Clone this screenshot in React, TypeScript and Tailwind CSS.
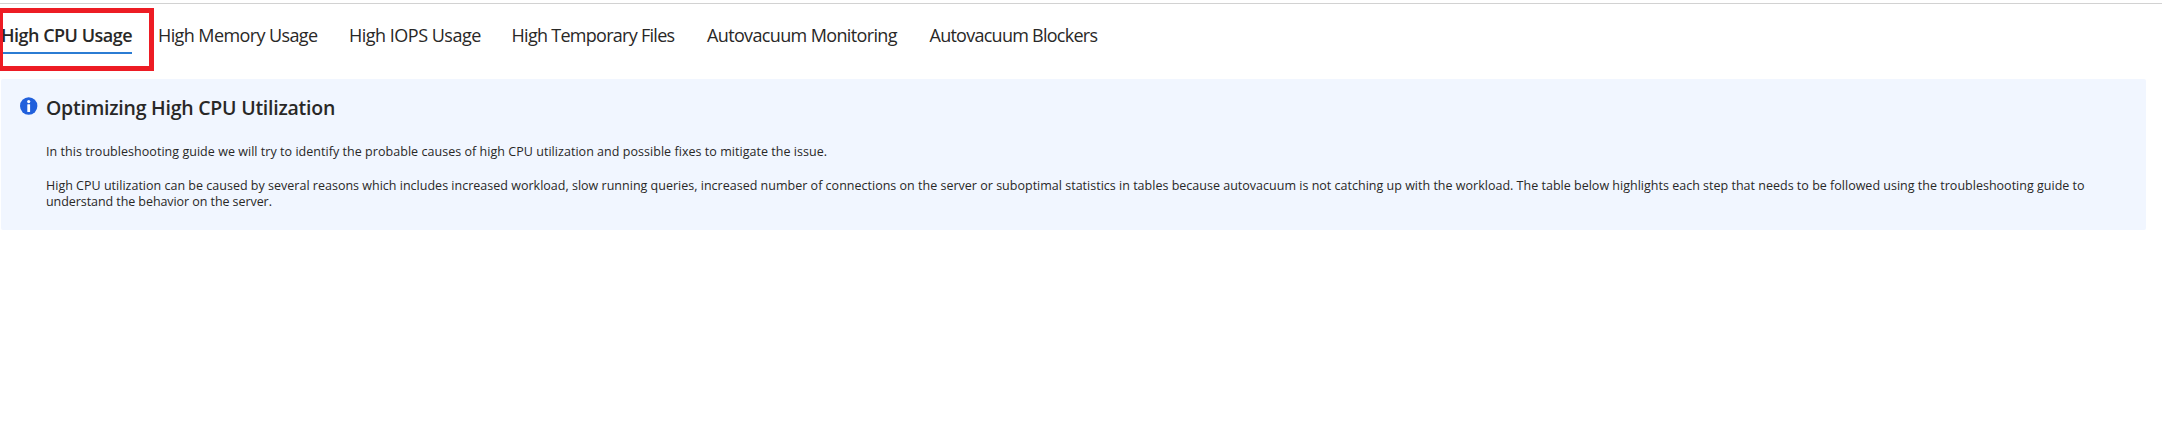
const tabs = [
  { label: 'High CPU Usage', style: 'w-[157px] font-semibold tracking-[-0.5px]' },
  { label: 'High Memory Usage', style: 'w-[191px] tracking-[-0.6px]' },
  { label: 'High IOPS Usage', style: 'w-[162.5px] tracking-[-0.5px]' },
  { label: 'High Temporary Files', style: 'w-[195.5px] tracking-[-0.72px]' },
  { label: 'Autovacuum Monitoring', style: 'w-[222.5px] tracking-[-0.64px]' },
  { label: 'Autovacuum Blockers', style: 'w-[190px] tracking-[-0.74px]' },
];

function InfoIcon() {
  return (
    <svg className="mt-[18px] size-[18px] shrink-0" viewBox="0 0 18 18">
      <circle cx="8.7" cy="9" r="8.7" fill="#2160dc" />
      <circle cx="8.7" cy="4.6" r="1.6" fill="#fff" />
      <rect x="7.3" y="7.3" width="2.8" height="7.8" rx="0.5" fill="#fff" />
    </svg>
  );
}

export default function App() {
  return (
    <div className="relative flex h-[426px] w-[2162px] flex-col overflow-hidden bg-white pt-[3px] font-['Open_Sans','Noto_Sans',sans-serif] text-[#292827]">
      <div className="h-px shrink-0 bg-[#d2d2d2]" />
      <nav className="flex h-[75px] shrink-0 pl-[1px] pt-[19px] text-[18px] leading-[24px] whitespace-nowrap">
        {tabs.map((tab, i) => (
          <div key={tab.label} className={`shrink-0 ${tab.style}`}>
            <span>{tab.label}</span>
            {i === 0 && <div className="mt-[5px] h-[2px] w-[131px] bg-[#2b7cd3]" />}
          </div>
        ))}
      </nav>
      <section className="ml-[1px] flex h-[151px] w-[2145px] shrink-0 rounded-[2px] bg-[#f1f6ff] pl-[19px]">
        <InfoIcon />
        <div className="ml-[8px]">
          <h1 className="mt-[15px] text-[19.5px] leading-[28px] font-semibold tracking-[-0.24px] whitespace-nowrap">Optimizing High CPU Utilization</h1>
          <p className="mt-[22px] text-[12.5px] leading-[16px] tracking-[0.04px] whitespace-nowrap">
            In this troubleshooting guide we will try to identify the probable causes of high CPU utilization and possible fixes to mitigate the issue.
          </p>
          <p className="mt-[18px] text-[12.5px] leading-[16px] tracking-[0.01px] whitespace-nowrap">
            High CPU utilization can be caused by several reasons which includes increased workload, slow running queries, increased number of connections on the server or suboptimal statistics in tables because autovacuum is not catching up with the workload. The table below highlights each step that needs to be followed using the troubleshooting guide to
            <br />
            <span className="tracking-[-0.07px]">understand the behavior on the server.</span>
          </p>
        </div>
      </section>
      <div className="absolute top-[8px] left-[-1px] h-[63px] w-[155px] border-[5px] border-l-[4px] border-[#ed1c24]" />
    </div>
  );
}
